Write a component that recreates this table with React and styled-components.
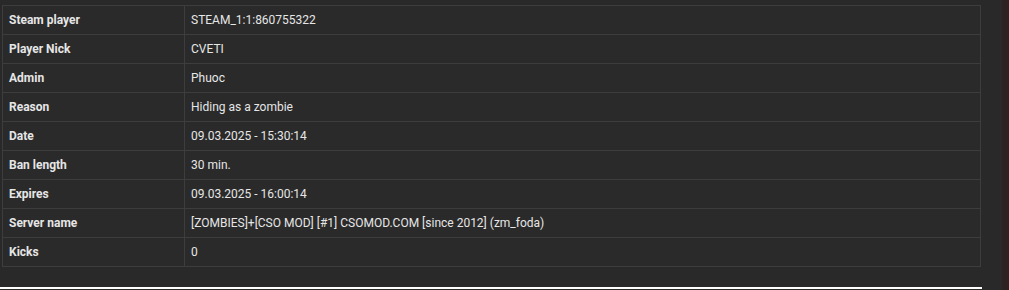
import React from 'react';
import styled, { createGlobalStyle } from 'styled-components';

const GlobalStyle = createGlobalStyle`
  html, body {
    margin: 0;
    padding: 0;
    background: #292929;
  }
  body {
    font-family: Roboto, "Liberation Sans", sans-serif;
  }
`;

const Page = styled.div`
  display: flex;
  width: 1009px;
  height: 290px;
  overflow: hidden;
`;

const Main = styled.div`
  flex: 1;
  display: flex;
  flex-direction: column;
  padding: 5px 20px 0 2px;
`;

const SideStrip = styled.div`
  width: 8px;
  background: #2e2121;
`;

const Table = styled.table`
  width: 979px;
  border-collapse: collapse;
  table-layout: fixed;
  background: #2a2a2a;
  color: #e6e6e6;
  font-size: 12px;
`;

const Cell = styled.td`
  height: 28px;
  padding: 0 6px;
  border: 1px solid #3d3d3d;
  font-weight: ${(p) => (p.$head ? 700 : 400)};
  white-space: nowrap;
  vertical-align: middle;
  line-height: 14px;
`;

const Rule = styled.div`
  margin: 20px 0 0 -2px;
  width: 982px;
  height: 2px;
  background: #ffffff;
`;

const rows = [
  ['Steam player', 'STEAM_1:1:860755322'],
  ['Player Nick', 'CVETI'],
  ['Admin', 'Phuoc'],
  ['Reason', 'Hiding as a zombie'],
  ['Date', '09.03.2025 - 15:30:14'],
  ['Ban length', '30 min.'],
  ['Expires', '09.03.2025 - 16:00:14'],
  ['Server name', '[ZOMBIES]+[CSO MOD] [#1] CSOMOD.COM [since 2012] (zm_foda)'],
  ['Kicks', '0'],
];

export default function App() {
  return (
    <Page>
      <GlobalStyle />
      <Main>
        <Table>
          <colgroup>
            <col style={{ width: 182 }} />
            <col />
          </colgroup>
          <tbody>
            {rows.map(([label, value]) => (
              <tr key={label}>
                <Cell $head>{label}</Cell>
                <Cell>{value}</Cell>
              </tr>
            ))}
          </tbody>
        </Table>
        <Rule />
      </Main>
      <SideStrip />
    </Page>
  );
}
